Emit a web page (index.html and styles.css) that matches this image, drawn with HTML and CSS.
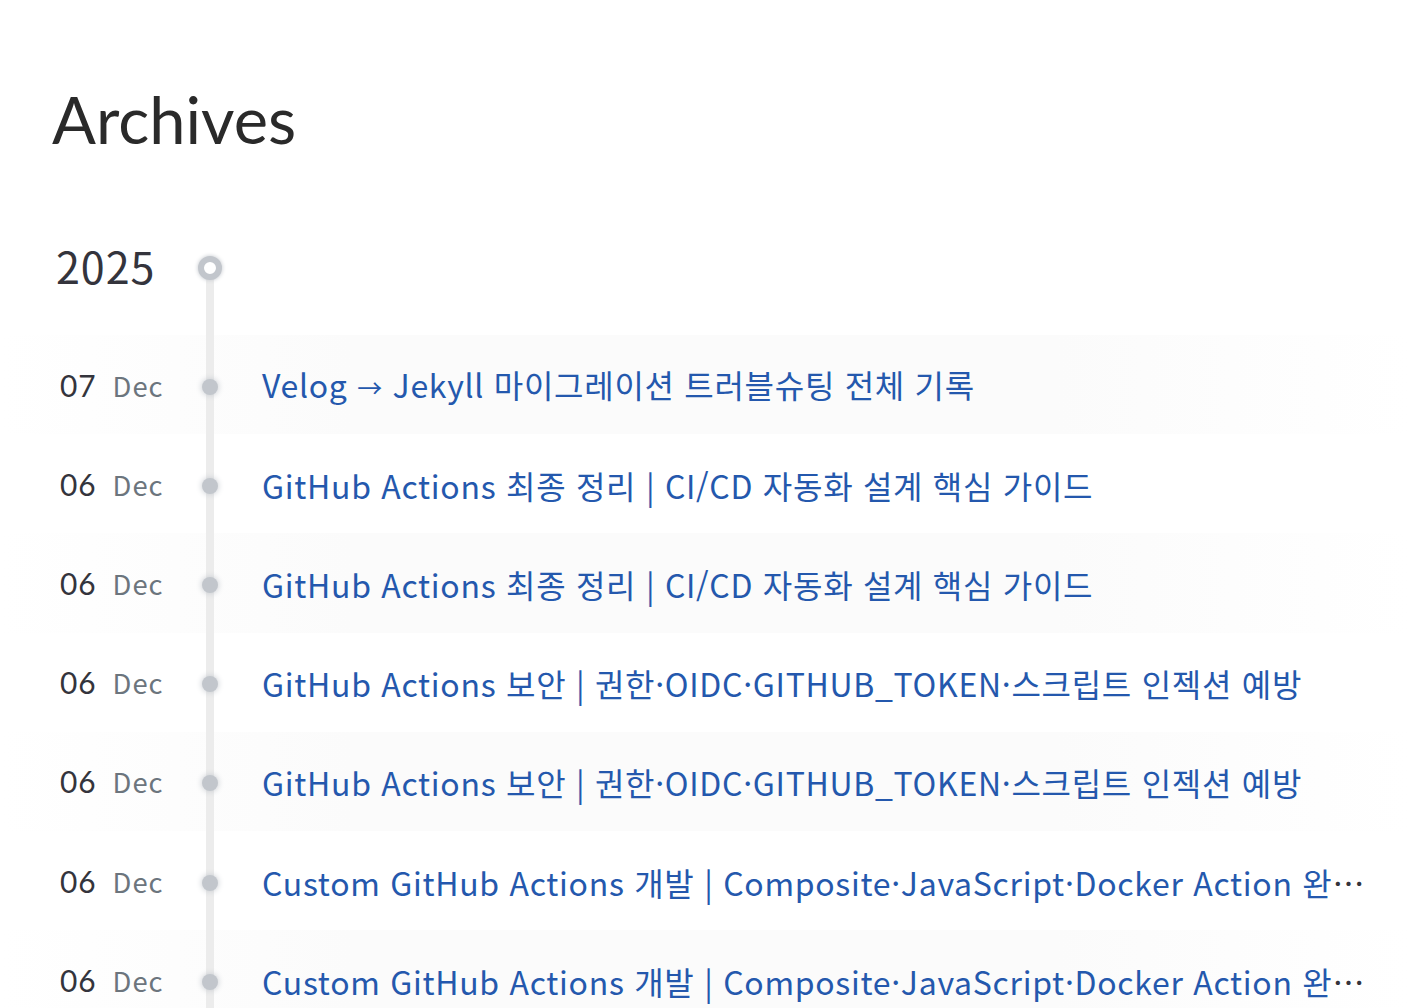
FILE: index.html
```html
<!DOCTYPE html>
<html lang="ko">
<head>
<meta charset="utf-8">
<title>Archives</title>
<link rel="stylesheet" href="styles.css">
</head>
<body>
<main class="page">
  <h1 class="page-title">Archives</h1>
  <section class="archives">
    <div class="year-row">
      <div class="year">2025</div>
      <div class="rail rail-start"><span class="year-dot"></span></div>
    </div>
    <ul class="posts">
      <li class="post">
        <div class="date"><span class="day">07</span><span class="month">Dec</span></div>
        <div class="rail"><span class="dot"></span></div>
        <div class="title"><a href="#">Velog <span class="arrow">→</span> Jekyll 마이그레이션 트러블슈팅 전체 기록</a></div>
      </li>
      <li class="post">
        <div class="date"><span class="day">06</span><span class="month">Dec</span></div>
        <div class="rail"><span class="dot"></span></div>
        <div class="title"><a href="#">GitHub Actions 최종 정리 | CI/CD 자동화 설계 핵심 가이드</a></div>
      </li>
      <li class="post">
        <div class="date"><span class="day">06</span><span class="month">Dec</span></div>
        <div class="rail"><span class="dot"></span></div>
        <div class="title"><a href="#">GitHub Actions 최종 정리 | CI/CD 자동화 설계 핵심 가이드</a></div>
      </li>
      <li class="post">
        <div class="date"><span class="day">06</span><span class="month">Dec</span></div>
        <div class="rail"><span class="dot"></span></div>
        <div class="title"><a href="#">GitHub Actions 보안 | 권한·OIDC·GITHUB_TOKEN·스크립트 인젝션 예방</a></div>
      </li>
      <li class="post">
        <div class="date"><span class="day">06</span><span class="month">Dec</span></div>
        <div class="rail"><span class="dot"></span></div>
        <div class="title"><a href="#">GitHub Actions 보안 | 권한·OIDC·GITHUB_TOKEN·스크립트 인젝션 예방</a></div>
      </li>
      <li class="post">
        <div class="date"><span class="day">06</span><span class="month">Dec</span></div>
        <div class="rail"><span class="dot"></span></div>
        <div class="title"><a href="#">Custom GitHub Actions 개발 | Composite·JavaScript·Docker Action 완전 정리 가이드</a></div>
      </li>
      <li class="post">
        <div class="date"><span class="day">06</span><span class="month">Dec</span></div>
        <div class="rail"><span class="dot"></span></div>
        <div class="title"><a href="#">Custom GitHub Actions 개발 | Composite·JavaScript·Docker Action 완전 정리 가이드</a></div>
      </li>
    </ul>
  </section>
</main>
</body>
</html>
```

FILE: styles.css
```css
html, body {
  margin: 0;
  padding: 0;
  background: #ffffff;
}

body {
  font-family: "Noto Sans CJK KR", "Noto Sans", sans-serif;
  color: #34343c;
  overflow: hidden;
}

.page {
  padding-top: 80px;
}

.page-title {
  margin: 0 0 43px 0;
  padding-left: 52px;
  font-family: "Lato", sans-serif;
  font-weight: 400;
  font-size: 65px;
  line-height: 1.2;
  color: #2a2a2a;
}

.archives {
  letter-spacing: 0.7px;
}

.year-row {
  display: flex;
  align-items: center;
  height: 134px;
  padding-left: 56px;
}

.year {
  width: 134px;
  font-size: 43px;
  line-height: 56px;
  letter-spacing: 0.96px;
  color: #34343c;
  transform: translateY(-3px);
}

.rail {
  flex: 0 0 40px;
  align-self: stretch;
  display: flex;
  align-items: center;
  justify-content: center;
  background-image: linear-gradient(#ececec, #ececec);
  background-repeat: no-repeat;
  background-position: center top;
  background-size: 8px 100%;
}

.rail-start {
  background-position: center bottom;
  background-size: 8px 50%;
}

.year-dot {
  box-sizing: border-box;
  width: 24px;
  height: 24px;
  border-radius: 50%;
  border: 6px solid #c2c6cc;
  background: #ffffff;
  box-shadow: 0 0 4px 0 #c2c6cc;
}

.dot {
  width: 16px;
  height: 16px;
  border-radius: 50%;
  background: #c2c6cc;
  box-shadow: 0 0 6px 0 #c2c6cc;
  transform: translateY(2px);
}

.posts {
  list-style: none;
  margin: 0;
  padding: 0;
}

.post {
  display: flex;
  align-items: center;
  height: 99.2px;
  padding-left: 60px;
  padding-right: 40px;
  font-size: 32px;
}

.post:nth-child(odd) {
  background-image: linear-gradient(to left, #ffffff, #fbfbfb, #fbfbfb, #fbfbfb, #ffffff);
}

.date {
  flex: 0 0 130px;
  display: flex;
  align-items: baseline;
  white-space: nowrap;
  letter-spacing: 0.96px;
}

.day {
  font-family: "Lato", sans-serif;
  font-size: 29.9px;
  color: #34343c;
}

.month {
  margin-left: 16px;
  font-size: 27.4px;
  color: #6c757d;
}

.title {
  flex: 1 1 auto;
  min-width: 0;
  padding-left: 32px;
  white-space: nowrap;
  overflow: hidden;
  text-overflow: ellipsis;
  color: #34343c;
  line-height: 48px;
  transform: translateY(1px);
}

.title a {
  color: #2458ad;
  text-decoration: none;
}

.arrow {
  font-size: 0.78em;
}
```
